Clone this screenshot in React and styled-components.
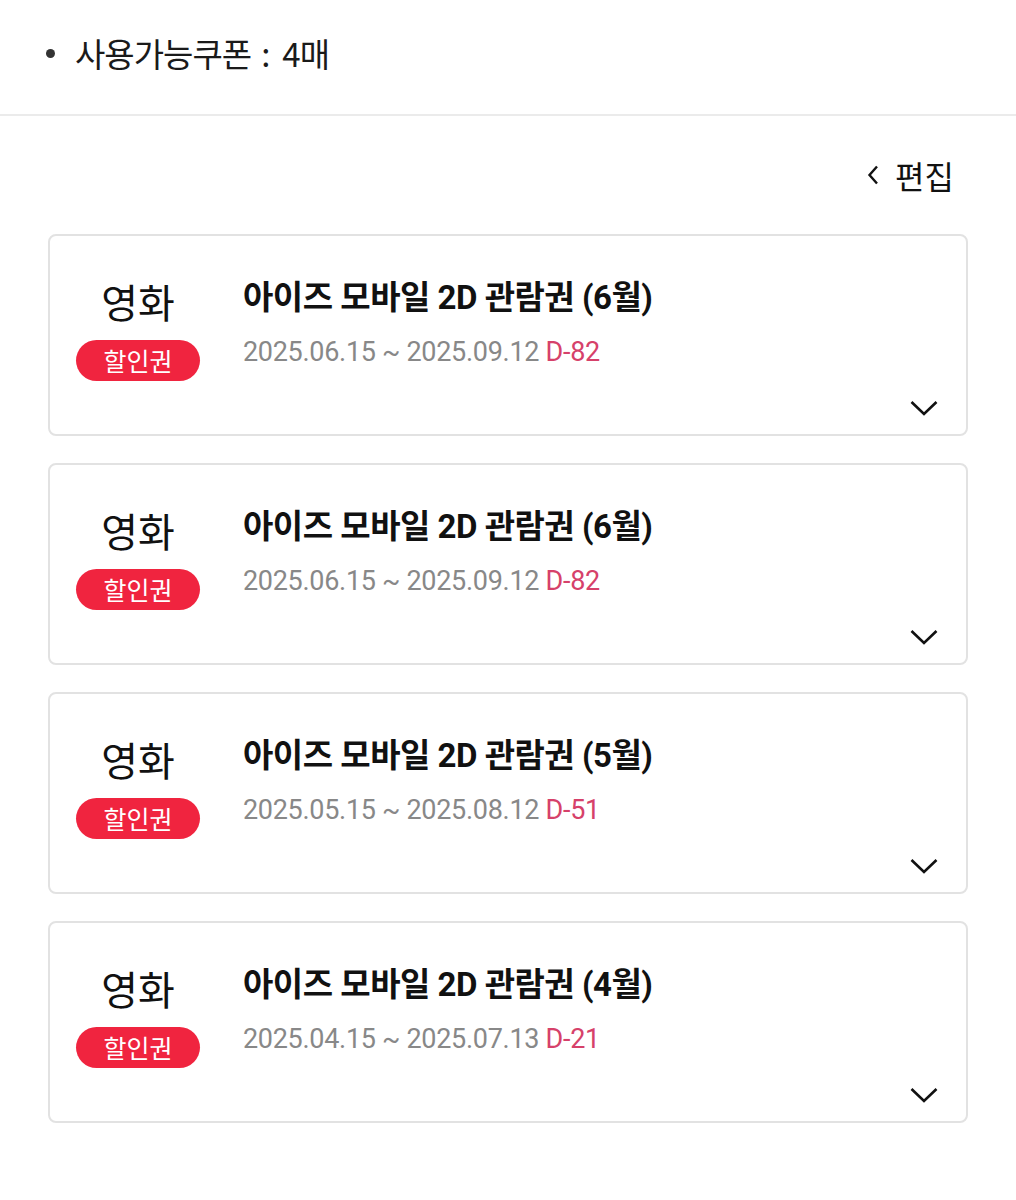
import React from "react";
import styled, { createGlobalStyle } from "styled-components";

const Global = createGlobalStyle`
  html, body { margin: 0; padding: 0; background: #fff; }
  body { font-family: Roboto, "Noto Sans CJK KR", sans-serif; color: #111; }
`;

const Page = styled.div`
  width: 1016px;
  min-height: 1200px;
  background: #fff;
`;

const Summary = styled.div`
  height: 116px;
  box-sizing: border-box;
  padding: 0 0 8px 46px;
  display: flex;
  align-items: center;
  border-bottom: 2px solid #ebebeb;
`;

const SummaryLine = styled.div`
  display: flex;
  align-items: center;
  height: 42px;
  font-family: "Noto Sans CJK KR", sans-serif;
  font-size: 33px;
  color: #1a1a1a;
  letter-spacing: -1px;
`;

const Colon = styled.span`
  margin: 0 13px 0 10px;
`;

const Bullet = styled.span`
  width: 9px;
  height: 9px;
  border-radius: 50%;
  background: #333;
  margin-right: 20px;
`;

const Content = styled.div`
  padding: 38px 48px 0;
`;

const EditBar = styled.div`
  display: flex;
  justify-content: flex-end;
  padding-right: 14px;
`;

const EditButton = styled.button`
  display: flex;
  align-items: center;
  gap: 16px;
  border: none;
  background: none;
  padding: 0;
  font-family: "Noto Sans CJK KR", sans-serif;
  font-size: 32px;
  color: #111;
  line-height: 42px;
  height: 42px;
`;

const List = styled.div`
  display: flex;
  flex-direction: column;
  gap: 27px;
  margin-top: 38px;
`;

const Card = styled.div`
  height: 202px;
  box-sizing: border-box;
  border: 2px solid #e2e2e2;
  border-radius: 8px;
  display: grid;
  grid-template-columns: 124px 1fr auto;
  column-gap: 43px;
  padding: 0 27px 0 26px;
`;

const Category = styled.div`
  display: flex;
  flex-direction: column;
  align-items: center;
  padding-top: 40px;
`;

const CategoryName = styled.div`
  font-family: "Noto Sans CJK KR", sans-serif;
  font-size: 40px;
  line-height: 50px;
  color: #111;
`;

const Badge = styled.div`
  margin-top: 14px;
  width: 124px;
  height: 41px;
  border-radius: 21px;
  background: #f0243f;
  color: #fff;
  font-family: "Noto Sans CJK KR", sans-serif;
  font-size: 25px;
  line-height: 41px;
  text-align: center;
`;

const Info = styled.div`
  padding-top: 40px;
`;

const Title = styled.div`
  font-family: Roboto, "Noto Sans CJK KR", sans-serif;
  font-weight: 700;
  font-size: 33px;
  line-height: 44px;
  letter-spacing: -0.5px;
  color: #111;
`;

const Period = styled.div`
  margin-top: 16px;
  font-family: Roboto, sans-serif;
  font-size: 27px;
  line-height: 32px;
  color: #888;
  letter-spacing: -0.3px;
`;

const DDay = styled.span`
  color: #d6416a;
`;

const Toggle = styled.div`
  align-self: end;
  margin-bottom: 17px;
  width: 30px;
  height: 18px;
  display: flex;
  align-items: center;
  justify-content: center;
`;

const ChevronLeft = () => (
  <svg width="12" height="20" viewBox="0 0 12 20">
    <path d="M10 1.5 L2.5 10 L10 18.5" fill="none" stroke="#111" strokeWidth="2.4" />
  </svg>
);

const ChevronDown = () => (
  <svg width="28" height="16" viewBox="0 0 28 16">
    <path d="M1.5 2 L14 14 L26.5 2" fill="none" stroke="#111" strokeWidth="2.6" />
  </svg>
);

const coupons = [
  { title: "아이즈 모바일 2D 관람권 (6월)", from: "2025.06.15", to: "2025.09.12", d: "D-82" },
  { title: "아이즈 모바일 2D 관람권 (6월)", from: "2025.06.15", to: "2025.09.12", d: "D-82" },
  { title: "아이즈 모바일 2D 관람권 (5월)", from: "2025.05.15", to: "2025.08.12", d: "D-51" },
  { title: "아이즈 모바일 2D 관람권 (4월)", from: "2025.04.15", to: "2025.07.13", d: "D-21" },
];

export default function App() {
  return (
    <Page>
      <Global />
      <Summary>
        <SummaryLine>
          <Bullet />
          사용가능쿠폰<Colon>:</Colon>4매
        </SummaryLine>
      </Summary>
      <Content>
        <EditBar>
          <EditButton>
            <ChevronLeft />
            편집
          </EditButton>
        </EditBar>
        <List>
          {coupons.map((c, i) => (
            <Card key={i}>
              <Category>
                <CategoryName>영화</CategoryName>
                <Badge>할인권</Badge>
              </Category>
              <Info>
                <Title>{c.title}</Title>
                <Period>
                  {c.from} ~ {c.to} <DDay>{c.d}</DDay>
                </Period>
              </Info>
              <Toggle>
                <ChevronDown />
              </Toggle>
            </Card>
          ))}
        </List>
      </Content>
    </Page>
  );
}
